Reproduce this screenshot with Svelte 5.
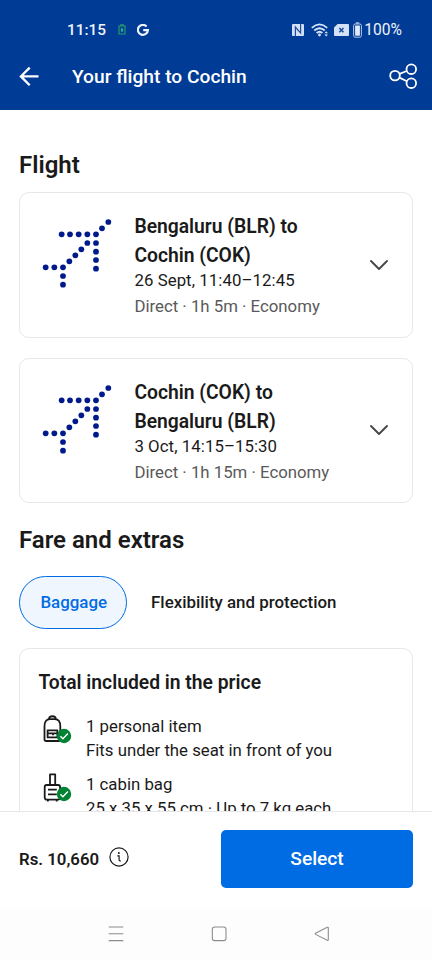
<script>
  const flights = [
    {
      from: 'Bengaluru (BLR)',
      to: 'Cochin (COK)',
      time: '26 Sept, 11:40–12:45',
      info: 'Direct · 1h 5m · Economy'
    },
    {
      from: 'Cochin (COK)',
      to: 'Bengaluru (BLR)',
      time: '3 Oct, 14:15–15:30',
      info: 'Direct · 1h 15m · Economy'
    }
  ];

  const bags = [
    { icon: 'backpack', name: '1 personal item', detail: 'Fits under the seat in front of you' },
    { icon: 'cabin', name: '1 cabin bag', detail: '25 x 35 x 55 cm · Up to 7 kg each' }
  ];

  // centres of the dots in the airline logo
  const dots = [
    [65, 55], [90, 55], [116, 55], [142, 55], [168, 55], [186, 37], [205, 18],
    [168, 81], [168, 107], [168, 132], [168, 158],
    [142, 81], [124, 100], [106, 118], [88, 136], [69, 154],
    [43, 154], [17, 154], [69, 180], [69, 206]
  ];

  const tabs = ['Baggage', 'Flexibility and protection'];
  let activeTab = $state('Baggage');
</script>

<div class="screen">
  <header>
    <div class="status">
      <span class="clock">11:15</span>
      <svg class="charge" width="8" height="11" viewBox="0 0 8 11">
        <path d="M1 2h6v8H1zM2.8 2V.7h2.4V2" fill="none" stroke="#27a06c" stroke-width="1.1" />
        <path d="M4 4v4M2.7 6h2.6" stroke="#34cf7b" stroke-width="1.1" />
      </svg>
      <svg class="google" width="12" height="12" viewBox="0 0 12 12">
        <path d="M9.6 2.5A5 5 0 1 0 10.9 6.1H6.2" fill="none" stroke="#eef3fc" stroke-width="2.2" />
      </svg>
      <div class="status-right">
        <svg class="nfc" width="12" height="12" viewBox="0 0 12 12">
          <rect width="12" height="12" rx="1" fill="#d3e0f6" />
          <path d="M3.4 12V3l3.2 3.8M8.6 0v9L5.2 5.2" fill="none" stroke="#1d4ca1" stroke-width="1.2" />
        </svg>
        <svg class="wifi" width="18" height="14" viewBox="0 0 18 14">
          <path d="M.8 4.8Q8.5-2 16.2 4.8M3.3 7.5Q8.5 2.9 13.7 7.5M5.6 10Q8.5 7.5 11.4 10" fill="none" stroke="#d9e5f8" stroke-width="1.8" />
          <circle cx="8.5" cy="12" r="1.4" fill="#d9e5f8" />
          <path d="M13.4 10.2l1.8-2 1.8 2zM13.4 11.4H17l-1.8 2z" fill="#d9e5f8" />
        </svg>
        <svg class="sim" width="15" height="12" viewBox="0 0 15 12">
          <path d="M3.6 0H14a1 1 0 0 1 1 1v10a1 1 0 0 1-1 1H1a1 1 0 0 1-1-1V3.6z" fill="#d3e0f6" />
          <path d="M5.3 4l4.2 4.2M9.5 4L5.3 8.2" stroke="#1d4ca1" stroke-width="1.6" />
        </svg>
        <svg class="battery" width="9" height="16" viewBox="0 0 9 16">
          <path d="M2.8 1h3.4" stroke="#b6c8e8" stroke-width="1.4" />
          <rect x=".6" y="2" width="7.8" height="13.2" rx="1.6" fill="none" stroke="#b6c8e8" />
          <rect x="2.1" y="3.5" width="4.8" height="10.2" fill="#e0eafa" />
        </svg>
        <span class="percent">100%</span>
      </div>
    </div>
    <div class="appbar">
      <svg width="20" height="20" viewBox="0 0 20 20">
        <path d="M19.5 10.4H2M10.7 1.6L1.9 10.4l8.8 8.8" fill="none" stroke="#fff" stroke-width="2.3" />
      </svg>
      <h1>Your flight to Cochin</h1>
      <svg width="28" height="26" viewBox="0 0 28 26">
        <g fill="none" stroke="#fff" stroke-width="1.8">
          <circle cx="6" cy="12.6" r="4.8" />
          <circle cx="22.3" cy="6.2" r="4.8" />
          <circle cx="22.3" cy="20.2" r="4.8" />
          <path d="M10.5 10.8L17.8 8M10.4 14.6l7.5 3.6" />
        </g>
      </svg>
    </div>
  </header>

  <main>
    <h2>Flight</h2>
    {#each flights as flight}
      <section class="card flight">
        <svg class="logo" width="72" height="72" viewBox="0 0 216 216">
          {#each dots as [x, y]}
            <circle cx={x} cy={y} r="8.6" fill="#001a8c" />
          {/each}
        </svg>
        <div class="details">
          <h3>{flight.from} to<br />{flight.to}</h3>
          <p class="time">{flight.time}</p>
          <p class="info">{flight.info}</p>
        </div>
        <svg class="chevron" width="20" height="12" viewBox="0 0 20 12">
          <path d="M2 2l8 8 8-8" fill="none" stroke="#474747" stroke-width="1.9" stroke-linecap="round" stroke-linejoin="round" />
        </svg>
      </section>
    {/each}

    <h2 class="fare">Fare and extras</h2>
    <div class="tabs">
      {#each tabs as tab}
        <button class="tab" class:active={tab === activeTab} onclick={() => (activeTab = tab)}>{tab}</button>
      {/each}
    </div>

    <section class="card included">
      <h3>Total included in the price</h3>
      {#each bags as bag}
        <div class="bag">
          <svg width="30" height="30" viewBox="0 0 30 30">
            <g fill="none" stroke="#1a1a1a" stroke-width="1.8" stroke-linejoin="round">
              {#if bag.icon === 'backpack'}
                <path d="M2.5 24.4V11.5q0-7.3 5.4-7.3h5q5.4 0 5.4 7.3v12.9a1.6 1.6 0 0 1-1.6 1.6H4.1a1.6 1.6 0 0 1-1.6-1.6z" />
                <path d="M6.9 4.4C7.1.2 13.7.2 13.9 4.4" />
                <path d="M5.6 15.4h9.8v7H5.6zM5.6 18.4h9.8M11 18.4v1.8" />
              {:else}
                <path d="M8 12V1.4h5.2V12" />
                <rect x="2.7" y="12" width="15.4" height="14.6" rx="2" />
                <path d="M6 16.7h8.8M6 21.4h8.8M5.9 26.6v1.8M14.7 26.6v1.8" />
              {/if}
            </g>
            <circle cx="22" cy="21" r="7.2" fill="#008234" />
            <path d="M18.4 21.3l2.5 2.5 5-5.2" fill="none" stroke="#fff" stroke-width="1.4" />
          </svg>
          <div>
            <p>{bag.name}</p>
            <p>{bag.detail}</p>
          </div>
        </div>
      {/each}
    </section>
  </main>

  <footer>
    <span class="price">Rs. 10,660</span>
    <svg class="info-icon" width="20" height="20" viewBox="0 0 20 20">
      <circle cx="10" cy="10" r="9.1" fill="none" stroke="#1a1a1a" stroke-width="1.2" />
      <circle cx="9.8" cy="6.1" r="1" fill="#1a1a1a" />
      <path d="M8.3 8.9h1.8v4.2q0 .9 1.8.9" fill="none" stroke="#1a1a1a" stroke-width="1.2" />
    </svg>
    <button class="select">Select</button>
  </footer>

  <nav>
    <svg width="16" height="16" viewBox="0 0 16 16">
      <path d="M.7 1h14.6M.7 7.8h14.6M.7 14.6h14.6" stroke="#8c8c8c" stroke-width="1.1" />
    </svg>
    <svg width="16" height="16" viewBox="0 0 16 16">
      <rect x="1.3" y="1" width="13.7" height="13.6" rx="2.4" fill="none" stroke="#8c8c8c" stroke-width="1.1" />
    </svg>
    <svg width="16" height="16" viewBox="0 0 16 16">
      <path d="M13.2 1.3Q14.3.9 14.3 2v11.6q0 1.1-1.1.7L1.6 8.4q-.8-.6 0-1.2z" fill="none" stroke="#8c8c8c" stroke-width="1.1" />
    </svg>
  </nav>
</div>

<style>
  .screen {
    display: flex;
    flex-direction: column;
    width: 432px;
    height: 960px;
    overflow: hidden;
    background: #fff;
    color: #1a1a1a;
    font-family: Roboto, sans-serif;
    font-size: 16.8px;
  }

  h1, h2, h3, p {
    margin: 0;
  }

  svg {
    display: block;
    flex: none;
  }

  button {
    border: none;
    font-family: inherit;
    cursor: pointer;
  }

  header {
    flex: none;
    height: 110px;
    background: #003b95;
    color: #fff;
  }

  .status {
    display: flex;
    align-items: center;
    height: 44px;
    padding: 15px 30px 0 67px;
    box-sizing: border-box;
    color: #eef3fc;
    font-size: 16px;
  }

  .clock {
    font-weight: 500;
    font-size: 15.4px;
  }

  .charge {
    margin-left: 12px;
  }

  .google {
    margin-left: 11px;
  }

  .status-right {
    display: flex;
    align-items: center;
    margin-left: auto;
  }

  .wifi {
    margin-left: 7px;
  }

  .sim {
    margin-left: 5px;
  }

  .battery {
    margin-left: 4px;
  }

  .percent {
    margin-left: 2px;
    font-size: 15.6px;
  }

  .appbar {
    display: flex;
    align-items: center;
    height: 64px;
    padding: 0 15px 0 19px;
  }

  h1 {
    flex: 1;
    margin-left: 33px;
    font-size: 19.2px;
    font-weight: 500;
  }

  main {
    flex: 1;
    min-height: 0;
    overflow: hidden;
    padding: 39px 19px 0;
  }

  h2 {
    font-size: 24px;
    line-height: 32px;
    font-weight: 600;
    margin-bottom: 11px;
  }

  h3 {
    font-size: 19.3px;
    line-height: 29px;
    font-weight: 600;
  }

  .card {
    box-sizing: border-box;
    border: 1px solid #e7e7e7;
    border-radius: 10px;
  }

  .flight {
    display: flex;
    height: 145.6px;
    padding: 19px 23px 0 20px;
    margin-bottom: 20px;
  }

  .logo {
    margin-top: 4px;
  }

  .details {
    flex: 1;
    margin-left: 22.4px;
  }

  .time {
    margin-top: -2px;
    line-height: 24px;
    margin-bottom: 2px;
    letter-spacing: 0.07px;
  }

  .info {
    line-height: 24px;
    color: #595959;
  }

  .chevron {
    margin-top: 46.6px;
  }

  .fare {
    padding-top: 1px;
    margin-bottom: 0;
  }

  .tabs {
    display: flex;
    height: 53px;
    margin: 19.6px 0 19px;
  }

  .tab {
    padding: 0 23px;
    border: 1px solid transparent;
    border-radius: 27px;
    background: none;
    color: #1a1a1a;
    font-size: 16.9px;
    font-weight: 500;
  }

  .tab.active {
    padding: 0 19px 0 20.4px;
    border-color: #006ce4;
    background: #f0f6fe;
    color: #006ce4;
  }

  .included {
    height: 300px;
    padding: 19px 18.4px;
  }

  .included h3 {
    margin-bottom: 17.4px;
  }

  .bag {
    display: flex;
    gap: 14px;
    margin-left: 3.6px;
    margin-bottom: 10px;
    line-height: 24px;
  }

  .bag svg {
    margin-top: 1px;
  }

  footer {
    display: flex;
    align-items: center;
    flex: none;
    height: 96px;
    padding: 0 19px 2px;
    box-sizing: border-box;
    border-top: 1px solid #e7e7e7;
  }

  .price {
    font-weight: 600;
  }

  .info-icon {
    margin: -3px 0 0 10px;
  }

  .select {
    width: 192px;
    height: 58px;
    margin-left: auto;
    border-radius: 5px;
    background: #006ce4;
    color: #fff;
    font-size: 19.2px;
    font-weight: 500;
  }

  nav {
    display: flex;
    justify-content: center;
    align-items: center;
    gap: 87px;
    flex: none;
    height: 53px;
    padding-left: 5px;
    background: #fdfdfd;
  }
</style>
